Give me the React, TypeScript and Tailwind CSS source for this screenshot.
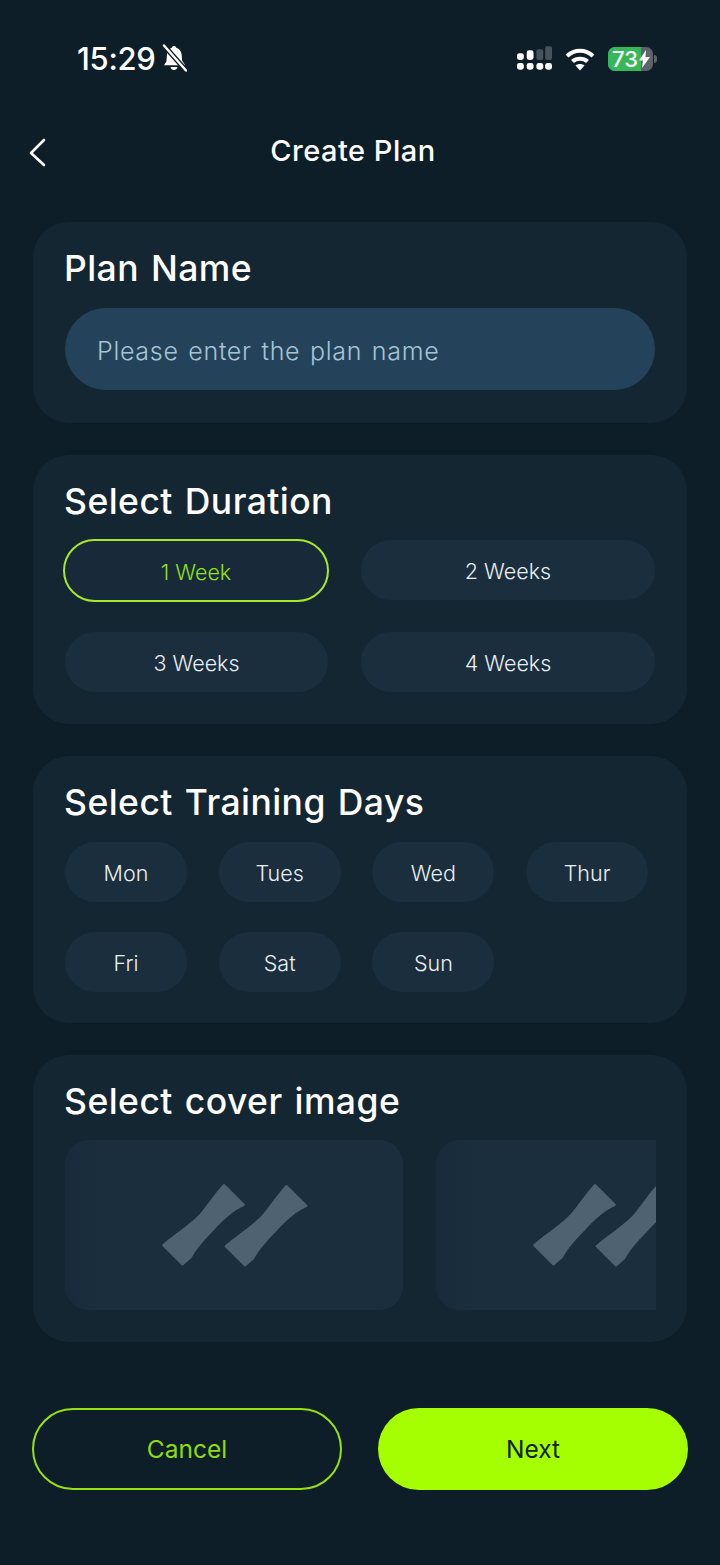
import React from "react";

const bone = "M63 2.5Q64 1.5 65 2.5L84.5 22Q85.5 23.5 84 24C73 29 64 37 55 47C46 56 37 66 31.500 76Q28 79 23.500 83Q22.500 84 21.500 83L2.500 64Q1.500 63 3 62C17 50 34 40 43 28C50 19 56 10 63 2.500Z";

function Bone() {
  return (
    <svg width="148" height="86" viewBox="0 0 148 86" className="shrink-0">
      <g fill="#4f6272">
        <path d={bone} />
        <path d={bone} transform="translate(62.5 1)" />
      </g>
    </svg>
  );
}

function Pill({ label, active }: { label: string; active?: boolean }) {
  return active ? (
    <div className="-ml-[2px] -mr-px -mt-px -mb-[2px] h-[63px] rounded-full bg-[#182a39] border-2 border-[#a8e82a] text-[#93e01a] text-[21.500px] font-light flex items-center justify-center pt-[3px]">
      {label}
    </div>
  ) : (
    <div className="h-[60px] rounded-full bg-[#1b2e3e] text-[#e9eff3] text-[21.500px] font-light flex items-center justify-center pt-[3px]">
      {label}
    </div>
  );
}

function Card({ title, pb, children }: { title: string; pb: string; children: React.ReactNode }) {
  return (
    <section className={`rounded-[36px] bg-[#142632] px-[32px] pt-[26px] ${pb}`}>
      <h2 className="-ml-px pt-px text-[35.500px] leading-[39px] font-medium text-white tracking-[0.450px] [word-spacing:2px]">{title}</h2>
      {children}
    </section>
  );
}

export default function App() {
  return (
    <div className="w-[720px] h-[1565px] bg-[#0e1e29] flex flex-col font-['Inter','Noto_Sans',sans-serif] overflow-hidden">
      <div className="h-[118px] pt-[39px] pl-[77px] pr-[63px] flex items-start justify-between">
        <div className="flex items-center h-[38px] gap-[5px]">
          <span className="text-[31px] font-medium text-white leading-none tracking-[-0.3px]">15:29</span>
          <svg width="26" height="28" viewBox="0 0 26 28" fill="white">
            <path d="M13 2c1.2 0 2 .8 2.2 1.800 3.400 1 5.300 3.800 5.500 7.400l.4 5.400 3 4.600H3l2.400-3.800.5-6.200C6 7.600 7.600 4.800 10.800 3.800 11 2.800 11.800 2 13 2Z" />
            <path d="M9.500 23h7c-.3 1.800-1.700 3-3.500 3s-3.200-1.200-3.500-3Z" />
            <path d="M3 1.500 25 26.500" stroke="#0e1e29" strokeWidth="5" />
            <path d="M3 1.500 25 26.500" stroke="white" strokeWidth="2.400" strokeLinecap="round" />
          </svg>
        </div>
        <div className="flex items-center h-[40px] gap-[13px]">
          <svg width="35" height="26" viewBox="0 0 36 26">
            <g fill="white">
              <rect x="0" y="7" width="7" height="7" rx="2.500" />
              <rect x="10" y="4" width="7" height="10" rx="2.500" />
              <rect x="0" y="17" width="7" height="7" rx="2.500" />
              <rect x="10" y="17" width="7" height="7" rx="2.500" />
              <rect x="20" y="17" width="7" height="7" rx="2.500" />
              <rect x="29" y="17" width="7" height="7" rx="2.500" />
            </g>
            <g fill="#46535d">
              <rect x="20" y="3" width="7" height="11" rx="2" />
              <rect x="29" y="0" width="7" height="14" rx="2" />
            </g>
          </svg>
          <svg width="30" height="24" viewBox="0 0 30 24" fill="none" stroke="white" strokeWidth="4.200">
            <path d="M2 9C9.500 2 20.500 2 28 9" />
            <path d="M7.500 14.500C11.500 10.800 18.500 10.800 22.500 14.500" />
            <path d="M15 23.500 10.500 18.500C13 16.500 17 16.500 19.500 18.500Z" fill="white" stroke="none" />
          </svg>
          <div className="flex items-center">
            <div className="w-[45px] h-[24px] rounded-[7px] bg-[#5c6369] overflow-hidden flex relative">
              <div className="w-[33px] h-full bg-[#36b85a]" />
              <span className="absolute left-[4px] top-0 h-full flex items-center text-[22px] font-medium text-white leading-none">73</span>
              <svg className="absolute left-[31px] top-[3px]" width="11" height="18" viewBox="0 0 11 18" fill="white">
                <path d="M7 0 0 10.500h4L3 18l8-11H6.500Z" />
              </svg>
            </div>
            <div className="w-[3px] h-[8px] bg-[#5c6369] rounded-r-full ml-[1px]" />
          </div>
        </div>
      </div>

      <div className="h-[66px] relative flex items-center justify-center pr-[14px] mb-[38px]">
        <svg className="absolute left-[28px] top-[19px]" width="20" height="30" viewBox="0 0 20 30" fill="none" stroke="white" strokeWidth="2.600" strokeLinecap="round" strokeLinejoin="round">
          <path d="M16 3 3 16l13 12" />
        </svg>
        <h1 className="text-[29px] font-medium text-white tracking-[0.5px]">Create Plan</h1>
      </div>

      <div className="px-[33px] flex flex-col gap-[32px]">
        <Card title="Plan Name" pb="pb-[33px]">
          <div className="mt-[20px] h-[82px] rounded-full bg-[#24435a] pl-[32px] pt-[5px] flex items-center text-[25px] font-light text-[#a6c4d4] tracking-[0.700px] [word-spacing:2px]">
            Please enter the plan name
          </div>
        </Card>
        <Card title="Select Duration" pb="pb-[32px]">
          <div className="mt-[19px] grid grid-cols-[263px_294px] gap-x-[33px] gap-y-[32px]">
            <Pill label="1 Week" active />
            <Pill label="2 Weeks" />
            <Pill label="3 Weeks" />
            <Pill label="4 Weeks" />
          </div>
        </Card>
        <Card title="Select Training Days" pb="pb-[31px]">
          <div className="mt-[20px] grid grid-cols-[repeat(4,122px)] gap-x-[31.700px] gap-y-[30px]">
            {["Mon", "Tues", "Wed", "Thur", "Fri", "Sat", "Sun"].map((d) => (
              <Pill key={d} label={d} />
            ))}
          </div>
        </Card>
        <Card title="Select cover image" pb="pb-[32px]">
          <div className="mt-[19px] w-[591px] flex gap-[33px] overflow-hidden">
            <div className="w-[338px] h-[170px] shrink-0 rounded-[24px] bg-linear-to-r from-[#192b3a] to-[#1b2e3e] to-[12%] flex items-center justify-center">
              <Bone />
            </div>
            <div className="w-[338px] h-[170px] shrink-0 rounded-[24px] bg-linear-to-r from-[#192b3a] to-[#1b2e3e] to-[12%] flex items-center justify-center">
              <Bone />
            </div>
          </div>
        </Card>
      </div>

      <div className="mt-[66px] pl-[32px] pr-[32px] flex justify-between">
        <div className="w-[310px] h-[82px] rounded-full border-2 border-[#98e010] text-[#8fdc0c] text-[24.500px] flex items-center justify-center">Cancel</div>
        <div className="w-[310px] h-[82px] rounded-full bg-[#a6ff00] text-[#10222c] text-[24.500px] flex items-center justify-center">Next</div>
      </div>
    </div>
  );
}
